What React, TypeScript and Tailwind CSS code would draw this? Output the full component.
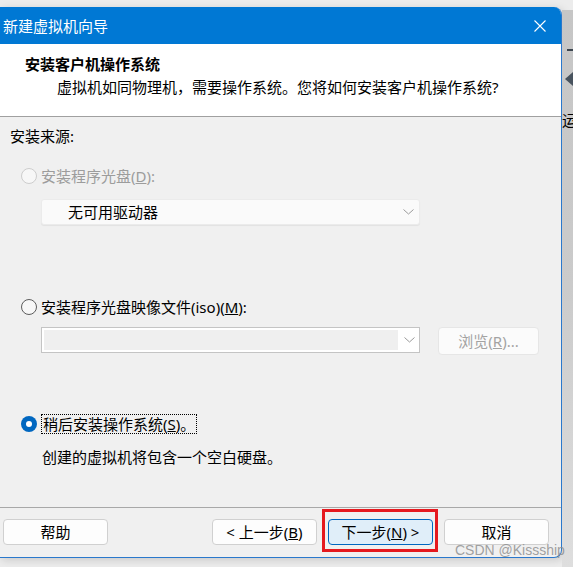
import { ReactNode } from "react";

const font = "font-['Noto_Sans','Noto_Sans_CJK_SC',sans-serif]";

function Chevron() {
  return (
    <svg width="11" height="6" viewBox="0 0 11 6" className="shrink-0">
      <path d="M0.5 0.5 L5.5 5 L10.5 0.5" fill="none" stroke="#9a9a9a" strokeWidth="1" />
    </svg>
  );
}

function Radio({ state }: { state: "disabled" | "off" | "on" }) {
  if (state === "on") {
    return (
      <div className="w-[16px] h-[16px] rounded-full bg-[#0067c0] flex items-center justify-center shrink-0">
        <div className="w-[6px] h-[6px] rounded-full bg-white" />
      </div>
    );
  }
  return (
    <div
      className={
        "w-[16px] h-[16px] rounded-full bg-[#f7f7f7] border shrink-0 " +
        (state === "disabled" ? "border-[#cdcdcd]" : "border-[#5c5c5c]")
      }
    />
  );
}

function Btn({ children, primary }: { children: ReactNode; primary?: boolean }) {
  return (
    <div
      className={
        "w-[105px] h-[26px] rounded-[4px] border flex items-center justify-center text-[15px] leading-[20px] text-black " +
        (primary ? "bg-[#e0eef9] border-[#0067c0]" : "bg-[#fdfdfd] border-[#d0d0d0]")
      }
    >
      {children}
    </div>
  );
}

export default function App() {
  return (
    <div className={"w-[573px] h-[567px] bg-[#ececec] flex flex-col overflow-hidden relative " + font}>
      <div className="h-[7px] shrink-0" />
      <div className="flex flex-1">
        {/* Dialog */}
        <div className="w-[562px] h-[551px] shrink-0 flex flex-col rounded-tr-[8px] rounded-br-[8px] border-r border-b border-[#2a78cc] overflow-hidden bg-[#f0f0f0] shadow-[2px_2px_8px_rgba(0,0,0,0.15)]">
          {/* Title bar */}
          <div className="h-[37px] shrink-0 bg-[#0078d4] flex items-center justify-between pl-[3px] pr-[15px]">
            <span className="text-white text-[15px] leading-[20px]">新建虚拟机向导</span>
            <svg width="12" height="12" viewBox="0 0 12 12">
              <path d="M0.5 0.5 L11.5 11.5 M11.5 0.5 L0.5 11.5" stroke="white" strokeWidth="1.1" />
            </svg>
          </div>

          {/* Header */}
          <div className="h-[73px] shrink-0 bg-white border-b border-[#a0a0a0] pt-[10px]">
            <div className="pl-[25px] text-[15px] leading-[20px] font-bold text-black">安装客户机操作系统</div>
            <div className="pl-[57px] mt-[3px] text-[15px] leading-[20px] text-black">
              虚拟机如同物理机，需要操作系统。您将如何安装客户机操作系统?
            </div>
          </div>

          {/* Body */}
          <div className="h-[391px] shrink-0 flex flex-col text-[15px] leading-[20px] text-black border-b border-[#a8a8a8]">
            <div className="pl-[10px] mt-[9px]">安装来源:</div>

            <div className="flex items-center gap-[4px] pl-[21px] mt-[20px] text-[#9c9c9c]">
              <Radio state="disabled" />
              <span>
                安装程序光盘(<span className="underline">D</span>):
              </span>
            </div>

            <div className="ml-[41px] mt-[13px] w-[379px] h-[26px] bg-[#fafafa] border border-[#ebebeb] rounded-[3px] shadow-[0_1px_1px_rgba(0,0,0,0.06)] flex items-center justify-between pl-[26px] pr-[5px]">
              <span>无可用驱动器</span>
              <Chevron />
            </div>

            <div className="flex items-center gap-[4px] pl-[21px] mt-[72px]">
              <Radio state="off" />
              <span>
                安装程序光盘映像文件(iso)(<span className="underline">M</span>):
              </span>
            </div>

            <div className="flex items-start ml-[41px] mt-[10px] gap-[18px]">
              <div className="w-[379px] h-[26px] bg-white border border-[#c4c4c4] flex items-center justify-between pl-[2px] pr-[4px]">
                <div className="w-[354px] h-[20px] bg-[#efefef]" />
                <Chevron />
              </div>
              <div className="w-[101px] h-[28px] rounded-[4px] bg-[#fbfbfb] border border-[#e6e6e6] flex items-center justify-center text-[#a3a3a3]">
                浏览(<span className="underline">R</span>)...
              </div>
            </div>

            <div className="flex items-center pl-[21px] mt-[59px]">
              <Radio state="on" />
              <div className="ml-[4px] h-[20px] border border-dotted border-black flex items-center px-[1px]">
                <span>
                  稍后安装操作系统(<span className="underline">S</span>)。
                </span>
              </div>
            </div>

            <div className="pl-[42px] mt-[13px]">创建的虚拟机将包含一个空白硬盘。</div>
          </div>

          {/* Footer */}
          <div className="flex-1 flex items-start pt-[11px] pl-[3px] pr-[12px]">
            <Btn>帮助</Btn>
            <div className="flex-1" />
            <Btn>
              &lt; 上一步(<span className="underline">B</span>)
            </Btn>
            <div className="relative ml-[11px]">
              <Btn primary>
                下一步(<span className="underline">N</span>) &gt;
              </Btn>
              <div className="absolute -left-[6px] -right-[5px] -top-[10px] -bottom-[7px] border-[3px] border-[#e5191f]" />
            </div>
            <div className="ml-[11px]">
              <Btn>取消</Btn>
            </div>
          </div>
        </div>

        {/* Window behind, right edge */}
        <div className="flex-1 mt-[3px] bg-gradient-to-b from-[#c6c6c6] via-[#cbcbcb] to-[#dedede] flex flex-col items-end overflow-hidden">
          <div className="mt-[39px] w-[6px] h-[2px] bg-[#3c4650]" />
          <div className="mt-[21px] w-0 h-0 border-y-[7px] border-y-transparent border-r-[8px] border-r-[#48535e]" />
          <div className="mt-[24px] -mr-[4px] text-[15px] leading-[20px] text-black">运</div>
        </div>
      </div>

      {/* Watermark */}
      <div className="absolute left-[455px] top-[541px] text-[14px] leading-[18px] text-[#8a8a8a]/80 font-['Liberation_Sans',sans-serif]">
        CSDN @Kissship
      </div>
    </div>
  );
}
